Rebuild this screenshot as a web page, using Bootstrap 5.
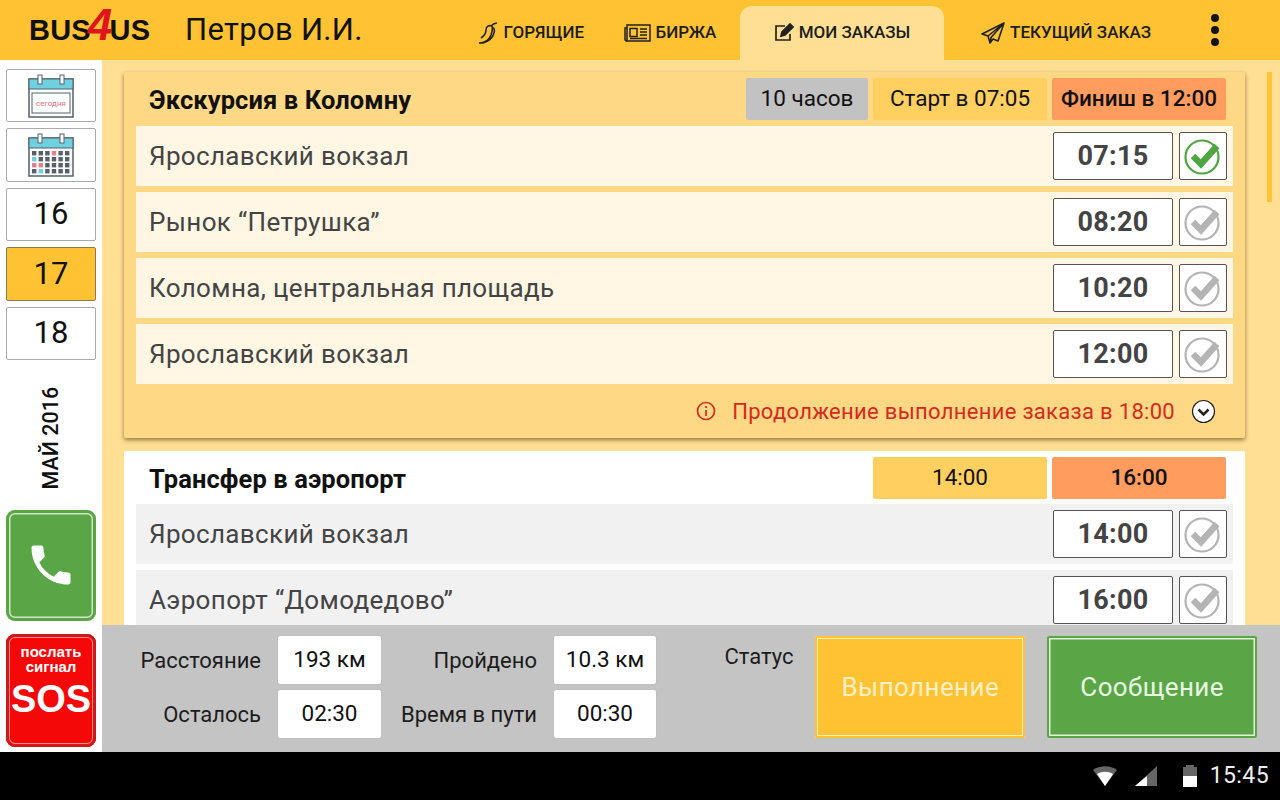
<!DOCTYPE html>
<html lang="ru">
<head>
  <meta charset="UTF-8" />
  <title>Bus4Us</title>
  <link href="https://cdn.jsdelivr.net/npm/bootstrap@5.3.2/dist/css/bootstrap.min.css" rel="stylesheet" />
  <style>
    html, body { height: 100%; overflow: hidden; }
    body { font-family: Roboto, "Liberation Sans", sans-serif; color: #111; }
    .app-shell { width: 1280px; height: 800px; }
    .top-bar { height: 60px; background: #ffc233; }
    .brand { width: 185px; padding-left: 29px; font: 700 29px/1 "Liberation Sans", sans-serif; color: #111; position: relative; letter-spacing: .2px; }
    .brand-four { color: #e3131b; font-style: italic; font-size: 44px; font-weight: 700; line-height: 30px; margin: -10px -3px 0 -3px; }
    .driver-name { font-size: 31px; width: 265px; letter-spacing: .3px; }
    .top-tab { height: 54px; margin-top: 6px; font-size: 17px; font-weight: 500; gap: 5px; color: #1c1c1c; }
    .top-tab.is-active { background: #ffdf94; border-radius: 12px 12px 0 0; }
    .tab-burn { width: 134px; }
    .tab-birzha { width: 156px; }
    .tab-orders { width: 204px; }
    .tab-current { width: 244px; }
    .kebab { width: 8px; margin-left: 23px; gap: 4px; }
    .kebab i { display: block; width: 8px; height: 8px; border-radius: 50%; background: #111; }
    .work-zone { height: 692px; }
    .side-rail { width: 102px; padding: 9px 6px 5px; }
    .day-btn { width: 90px; height: 54px; border: 1px solid #aaa; border-radius: 2px; font-size: 31px; background: #fff; margin-bottom: 6px; }
    .day-btn.is-picked { background: #ffc233; border-color: #8a7a50; }
    .month-label { height: 145px; }
    .month-label span { display: block; transform: rotate(-90deg); white-space: nowrap; font-size: 21.5px; font-weight: 500; }
    .call-btn { height: 113px; width: 90px; background: #5aa647; border-radius: 9px; box-shadow: inset 0 0 0 3px #5aa647, inset 0 0 0 4.5px #cde6c4; margin-bottom: 13px; }
    .sos-btn { height: 114px; width: 90px; background: #f40808; border-radius: 9px; color: #fff; box-shadow: 0 0 0 1px #c81a1a inset, inset 0 0 0 3px #d81818, inset 0 0 0 4px #ff8a8a; font-family: "Liberation Sans", sans-serif; font-weight: 700; }
    .sos-small { font-size: 15px; line-height: 15px; margin-top: 10px; }
    .sos-big { font-size: 38px; line-height: 44px; margin-top: 3px; }
    .orders-pane { background: #ffdf94; min-width: 0; }
    .orders-scroll { height: 565px; overflow: hidden; padding: 12px 0 0 22px; position: relative; }
    .scroll-thumb { position: absolute; left: 1165px; top: 12px; width: 5px; height: 130px; background: #ffc233; }
    .order-box { width: 1121px; border: 0; border-radius: 2px; margin-bottom: 13px; padding: 0 12px; }
    .order-box.is-current { background: #ffd885; box-shadow: 0 2px 4px rgba(70,50,0,.6); }
    .order-box.is-next { background: #fff; }
    .order-head { height: 54px; padding: 0 7px 0 13px; }
    .order-title { font-size: 25.5px; font-weight: 700; margin: 3px 0 0; letter-spacing: .1px; }
    .is-next .order-head { height: 53px; }
    .head-chip { height: 42px; border-radius: 2px; font-size: 22.5px; }
    .chip-span { width: 122px; background: #c2c2c2; margin-right: 5px; }
    .chip-start { width: 174px; background: #ffcf60; margin-right: 5px; }
    .chip-end { width: 174px; background: #ff9c5e; font-weight: 500; }
    .stop-row { height: 60px; margin-bottom: 6px; background: #fff6e4; padding: 0 6px 0 13px; font-size: 26px; color: #444; letter-spacing: .35px; }
    .is-next .stop-row { background: #f1f1f1; }
    .stop-time { width: 120px; height: 48px; background: #fff; border: 1px solid #555; border-radius: 2px; font-size: 27px; font-weight: 700; color: #444; margin-right: 6px; letter-spacing: .3px; }
    .stop-check { width: 48px; height: 48px; background: #fff; border: 1px solid #555; border-radius: 2px; }
    .order-note { height: 54px; margin-top: -6px; padding: 0 17px 0 0; color: #d52b1e; font-size: 22px; letter-spacing: .3px; }
    .stats-bar { height: 127px; background: #c4c4c4; padding: 11px 23px 14px 0; }
    .stats-grid { display: grid; grid-template-columns: 176px 103px 173px 102px; row-gap: 6px; align-items: center; width: 588px; }
    .stat-name { font-size: 22px; text-align: right; padding-right: 17px; color: #1c1c1c; }
    .stat-val { height: 48px; background: #fff; border-radius: 2px; font-size: 22.5px; box-shadow: 0 0 1px #999; }
    .status-name { font-size: 22px; width: 126px; padding-left: 35px; padding-top: 4px; color: #1c1c1c; }
    .big-action { height: 102px; width: 210px; font-size: 26px; letter-spacing: .4px; border-radius: 2px; }
    .action-run { background: #ffc233; color: #fff; box-shadow: inset 0 0 0 2px #ffc233, inset 0 0 0 3px #fff0b8; margin-right: 22px; color: #fdf0c8; }
    .action-msg { background: #5aa647; color: #eaf6e4; box-shadow: inset 0 0 0 2px #5aa647, inset 0 0 0 3.5px #e4f4dc; }
    .sys-bar { height: 48px; background: #000; color: #eee; padding-right: 11px; }
    .sys-clock { font-size: 23px; margin-left: 12px; letter-spacing: .4px; }
  </style>
</head>
<body>
  <div class="app-shell d-flex flex-column">

    <!-- Top bar -->
    <div class="top-bar d-flex align-items-center">
      <div class="brand d-flex align-items-center"><span>BUS</span><span class="brand-four">4</span><span>US</span></div>
      <div class="driver-name">Петров И.И.</div>
      <div class="top-tab tab-burn d-flex align-items-center justify-content-end">
        <svg width="22" height="24" viewBox="0 0 22 24" fill="none" stroke="#222" stroke-width="1.6"><path d="M2 22c6 0 10-3 12-8 1-3 2-6 1-9M14 5c2-2 4-3 6-3M15 5c-3-1-6 0-6 4 0 3-2 6-5 8M15 6c2 1 3 3 2 6-1 4-5 8-11 10"/></svg>
        <span>ГОРЯЩИЕ</span>
      </div>
      <div class="top-tab tab-birzha d-flex align-items-center justify-content-center ps-3">
        <svg width="27" height="18" viewBox="0 0 27 18" fill="none" stroke="#222" stroke-width="1.5"><rect x="3" y="1" width="23" height="16"/><path d="M3 4H1v11c0 1 1 2 2 2"/><rect x="6" y="4.500" width="7" height="8"/><path d="M16 5h7M16 8h7M16 11h7M6 14.500h17"/></svg>
        <span>БИРЖА</span>
      </div>
      <div class="top-tab tab-orders is-active d-flex align-items-center justify-content-center">
        <svg width="20" height="20" viewBox="0 0 20 20" fill="none" stroke="#222" stroke-width="1.7"><path d="M16 11v6H2V3h9"/><path d="M7 13l1-4 8-8 3 3-8 8z" fill="#222"/></svg>
        <span>МОИ ЗАКАЗЫ</span>
      </div>
      <div class="top-tab tab-current d-flex align-items-center justify-content-center">
        <svg width="24" height="22" viewBox="0 0 24 22" fill="none" stroke="#222" stroke-width="1.6" stroke-linejoin="round"><path d="M23 1L1 12l6 2 2 7 3-4 5 2zM7 14L23 1 10 15.500 9 21"/></svg>
        <span>ТЕКУЩИЙ ЗАКАЗ</span>
      </div>
      <div class="kebab d-flex flex-column"><i></i><i></i><i></i></div>
    </div>

    <div class="work-zone d-flex">
      <!-- Left rail -->
      <div class="side-rail d-flex flex-column">
        <div class="day-btn d-flex align-items-center justify-content-center">
          <svg width="46" height="44" viewBox="0 0 46 44"><rect x="1" y="5" width="44" height="38" fill="#fff" stroke="#56606a" stroke-width="1.500"/><rect x="1" y="5" width="44" height="10" fill="#6fd0e0" stroke="#56606a" stroke-width="1"/><rect x="10" y="1" width="4" height="9" fill="#fff" stroke="#56606a"/><rect x="32" y="1" width="4" height="9" fill="#fff" stroke="#56606a"/><rect x="4" y="19" width="38" height="20" fill="#fff" stroke="#56606a"/><text x="23" y="32" text-anchor="middle" font-size="8" fill="#e8707c" font-family="Roboto, sans-serif">сегодня</text></svg>
        </div>
        <div class="day-btn d-flex align-items-center justify-content-center">
          <svg id="month-icon" width="46" height="44" viewBox="0 0 46 44"><rect x="1" y="5" width="44" height="38" fill="#fff" stroke="#56606a" stroke-width="1.500"/><rect x="1" y="5" width="44" height="10" fill="#6fd0e0" stroke="#56606a" stroke-width="1"/><rect x="10" y="1" width="4" height="9" fill="#fff" stroke="#56606a"/><rect x="32" y="1" width="4" height="9" fill="#fff" stroke="#56606a"/></svg>
        </div>
        <div class="day-btn d-flex align-items-center justify-content-center">16</div>
        <div class="day-btn is-picked d-flex align-items-center justify-content-center">17</div>
        <div class="day-btn d-flex align-items-center justify-content-center">18</div>
        <div class="month-label d-flex align-items-center justify-content-center"><span>МАЙ 2016</span></div>
        <div class="call-btn d-flex align-items-center justify-content-center">
          <svg width="52" height="52" viewBox="0 0 24 24" fill="#fff"><path d="M6.620 10.790c1.440 2.830 3.760 5.140 6.590 6.590l2.200-2.200c.27-.27.670-.36 1.020-.24 1.120.37 2.330.57 3.570.57.550 0 1 .450 1 1V20c0 .55-.45 1-1 1-9.390 0-17-7.610-17-17 0-.55.45-1 1-1h3.500c.55 0 1 .45 1 1 0 1.250.2 2.450.57 3.570.11.350.03.740-.25 1.020z"/></svg>
        </div>
        <div class="sos-btn d-flex flex-column align-items-center">
          <div class="sos-small text-center">послать<br>сигнал</div>
          <div class="sos-big">SOS</div>
        </div>
      </div>

      <div class="orders-pane flex-grow-1 d-flex flex-column">
        <div class="orders-scroll">
          <div class="scroll-thumb"></div>

          <div class="card order-box is-current">
            <div class="order-head d-flex align-items-center">
              <h2 class="order-title me-auto">Экскурсия в Коломну</h2>
              <div class="head-chip chip-span d-flex align-items-center justify-content-center">10 часов</div>
              <div class="head-chip chip-start d-flex align-items-center justify-content-center">Старт в 07:05</div>
              <div class="head-chip chip-end d-flex align-items-center justify-content-center">Финиш в 12:00</div>
            </div>
            <div class="stop-row d-flex align-items-center">
              <span class="me-auto">Ярославский вокзал</span>
              <div class="stop-time d-flex align-items-center justify-content-center">07:15</div>
              <div class="stop-check d-flex align-items-center justify-content-center"><svg width="40" height="40" viewBox="0 0 40 40" fill="none"><circle cx="19" cy="21" r="16.500" stroke="#4fa540" stroke-width="2.200"/><path d="M10 20l8 8L34 10" stroke="#4fa540" stroke-width="6.500"/></svg></div>
            </div>
            <div class="stop-row d-flex align-items-center">
              <span class="me-auto">Рынок “Петрушка”</span>
              <div class="stop-time d-flex align-items-center justify-content-center">08:20</div>
              <div class="stop-check d-flex align-items-center justify-content-center"><svg width="40" height="40" viewBox="0 0 40 40" fill="none"><circle cx="19" cy="21" r="16.500" stroke="#b4b4b4" stroke-width="2.200"/><path d="M10 20l8 8L34 10" stroke="#b4b4b4" stroke-width="6.500"/></svg></div>
            </div>
            <div class="stop-row d-flex align-items-center">
              <span class="me-auto">Коломна, центральная площадь</span>
              <div class="stop-time d-flex align-items-center justify-content-center">10:20</div>
              <div class="stop-check d-flex align-items-center justify-content-center"><svg width="40" height="40" viewBox="0 0 40 40" fill="none"><circle cx="19" cy="21" r="16.500" stroke="#b4b4b4" stroke-width="2.200"/><path d="M10 20l8 8L34 10" stroke="#b4b4b4" stroke-width="6.500"/></svg></div>
            </div>
            <div class="stop-row d-flex align-items-center">
              <span class="me-auto">Ярославский вокзал</span>
              <div class="stop-time d-flex align-items-center justify-content-center">12:00</div>
              <div class="stop-check d-flex align-items-center justify-content-center"><svg width="40" height="40" viewBox="0 0 40 40" fill="none"><circle cx="19" cy="21" r="16.500" stroke="#b4b4b4" stroke-width="2.200"/><path d="M10 20l8 8L34 10" stroke="#b4b4b4" stroke-width="6.500"/></svg></div>
            </div>
            <div class="order-note d-flex align-items-center justify-content-end">
              <svg class="me-3" width="20" height="20" viewBox="0 0 20 20" fill="none" stroke="#d52b1e" stroke-width="1.700"><circle cx="10" cy="10" r="8.500"/><path d="M10 9v6M10 5v2"/></svg>
              <span>Продолжение выполнение заказа в 18:00</span>
              <svg class="ms-3" width="25" height="25" viewBox="0 0 25 25" fill="none"><circle cx="12.500" cy="12.500" r="11" fill="#fff" stroke="#222" stroke-width="1.200"/><path d="M7.500 10.500l5 5 5-5" stroke="#222" stroke-width="2.500"/></svg>
            </div>
          </div>

          <div class="card order-box is-next">
            <div class="order-head d-flex align-items-center">
              <h2 class="order-title me-auto">Трансфер в аэропорт</h2>
              <div class="head-chip chip-start d-flex align-items-center justify-content-center">14:00</div>
              <div class="head-chip chip-end d-flex align-items-center justify-content-center">16:00</div>
            </div>
            <div class="stop-row d-flex align-items-center">
              <span class="me-auto">Ярославский вокзал</span>
              <div class="stop-time d-flex align-items-center justify-content-center">14:00</div>
              <div class="stop-check d-flex align-items-center justify-content-center"><svg width="40" height="40" viewBox="0 0 40 40" fill="none"><circle cx="19" cy="21" r="16.500" stroke="#b4b4b4" stroke-width="2.200"/><path d="M10 20l8 8L34 10" stroke="#b4b4b4" stroke-width="6.500"/></svg></div>
            </div>
            <div class="stop-row d-flex align-items-center">
              <span class="me-auto">Аэропорт “Домодедово”</span>
              <div class="stop-time d-flex align-items-center justify-content-center">16:00</div>
              <div class="stop-check d-flex align-items-center justify-content-center"><svg width="40" height="40" viewBox="0 0 40 40" fill="none"><circle cx="19" cy="21" r="16.500" stroke="#b4b4b4" stroke-width="2.200"/><path d="M10 20l8 8L34 10" stroke="#b4b4b4" stroke-width="6.500"/></svg></div>
            </div>
          </div>
        </div>

        <!-- Bottom stats -->
        <div class="stats-bar d-flex align-items-start">
          <div class="stats-grid">
            <div class="stat-name">Расстояние</div>
            <div class="stat-val d-flex align-items-center justify-content-center">193 км</div>
            <div class="stat-name">Пройдено</div>
            <div class="stat-val d-flex align-items-center justify-content-center">10.3 км</div>
            <div class="stat-name">Осталось</div>
            <div class="stat-val d-flex align-items-center justify-content-center">02:30</div>
            <div class="stat-name">Время в пути</div>
            <div class="stat-val d-flex align-items-center justify-content-center">00:30</div>
          </div>
          <div class="status-name">Статус</div>
          <div class="big-action action-run d-flex align-items-center justify-content-center">Выполнение</div>
          <div class="big-action action-msg d-flex align-items-center justify-content-center">Сообщение</div>
        </div>
      </div>
    </div>

    <!-- Android status bar -->
    <div class="sys-bar d-flex align-items-center justify-content-end">
      <svg width="26" height="22" viewBox="0 0 26 22"><path d="M1 5c7-5 17-5 24 0L13 21z" fill="#666"/><path d="M5 9c5-3 11-3 16 0l-8 12z" fill="#fff"/></svg>
      <svg class="ms-3" width="24" height="22" viewBox="0 0 24 22"><path d="M23 1v20H1z" fill="#666"/><path d="M13 11v10H1z" fill="#fff"/></svg>
      <svg class="ms-4" width="16" height="24" viewBox="0 0 16 24"><path d="M4 1h8v2h3v20H1V3h3z" fill="#666"/><rect x="1" y="12" width="14" height="11" fill="#fff"/></svg>
      <span class="sys-clock">15:45</span>
    </div>
  </div>

  <script src="https://cdn.jsdelivr.net/npm/bootstrap@5.3.2/dist/js/bootstrap.bundle.min.js"></script>
  <script>
    // month grid cells of the calendar icon
    const icon = document.getElementById("month-icon");
    const tint = { 3: "#e8808c", 6: "#6fd0e0", 12: "#e8808c", 13: "#e8808c", 19: "#6fd0e0" };
    for (let i = 0; i < 24; i++) {
      const cell = document.createElementNS("http://www.w3.org/2000/svg", "rect");
      cell.setAttribute("x", 4 + (i % 6) * 6.600);
      cell.setAttribute("y", 18 + Math.floor(i / 6) * 6);
      cell.setAttribute("width", 4.400);
      cell.setAttribute("height", 4.400);
      cell.setAttribute("fill", tint[i] || "#56606a");
      icon.appendChild(cell);
    }
  </script>
</body>
</html>
